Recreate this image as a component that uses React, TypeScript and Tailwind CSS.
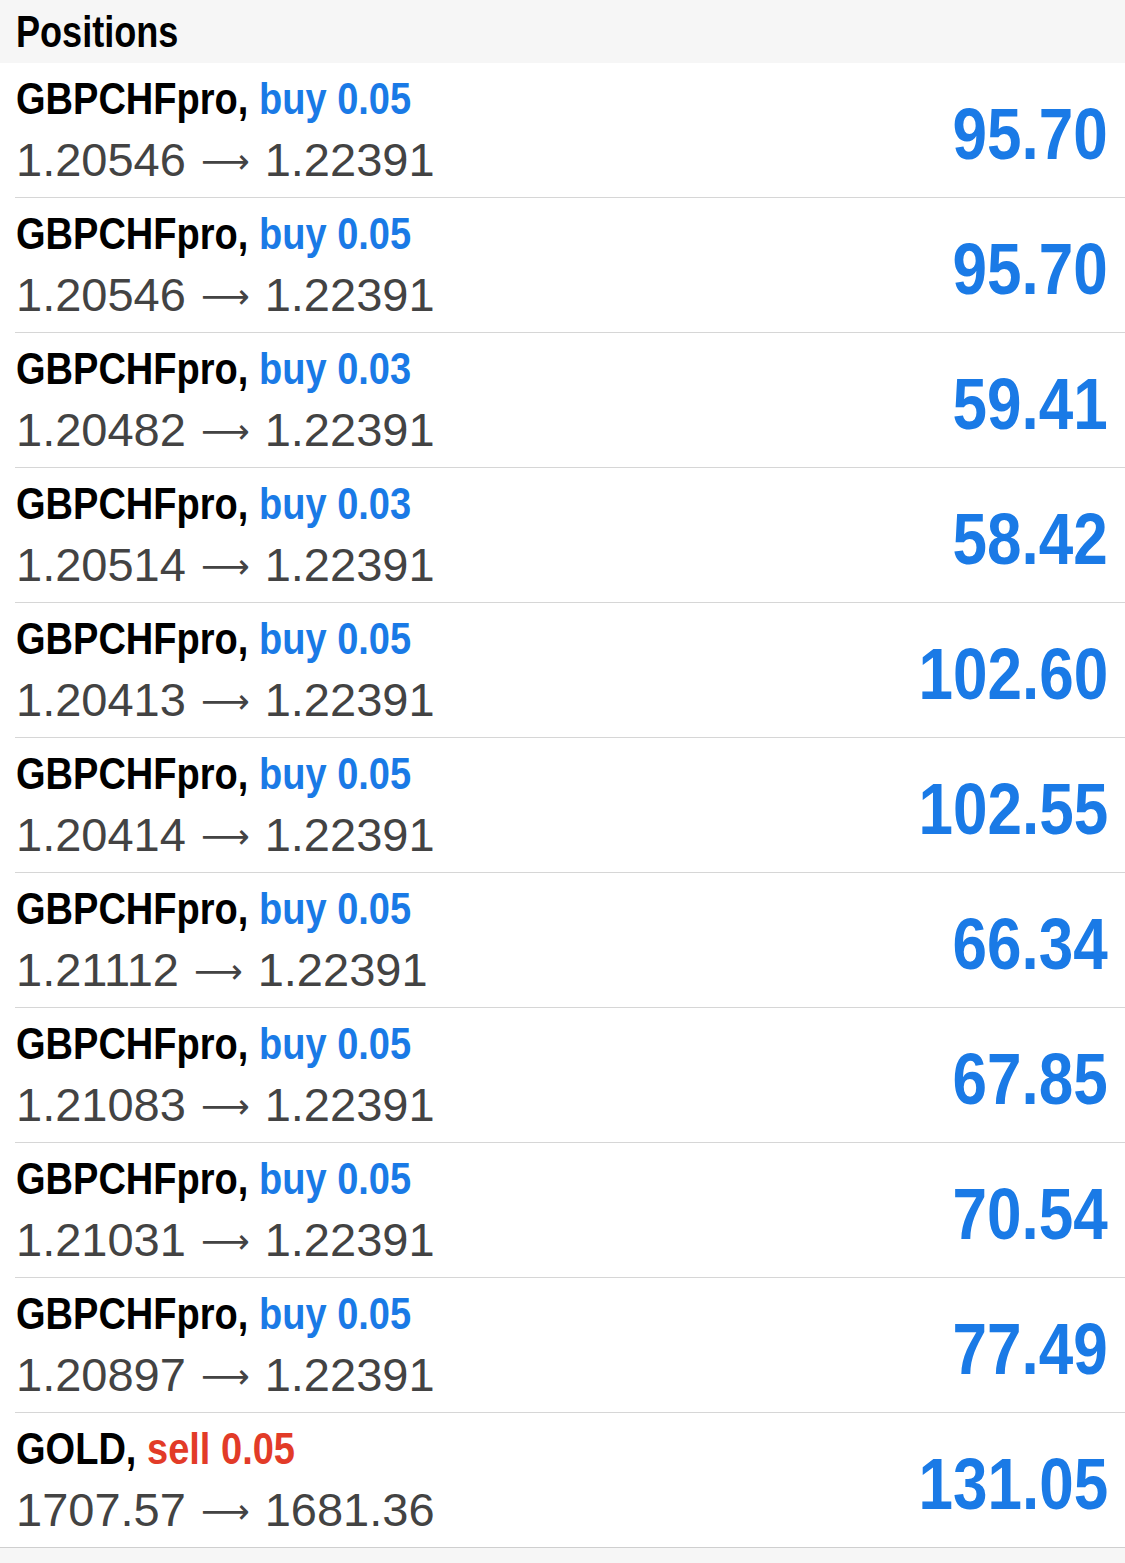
import React from 'react';

interface Position {
  symbol: string;
  side: 'buy' | 'sell';
  volume: string;
  open: string;
  current: string;
  profit: string;
}

const positions: Position[] = [
  { symbol: 'GBPCHFpro', side: 'buy', volume: '0.05', open: '1.20546', current: '1.22391', profit: '95.70' },
  { symbol: 'GBPCHFpro', side: 'buy', volume: '0.05', open: '1.20546', current: '1.22391', profit: '95.70' },
  { symbol: 'GBPCHFpro', side: 'buy', volume: '0.03', open: '1.20482', current: '1.22391', profit: '59.41' },
  { symbol: 'GBPCHFpro', side: 'buy', volume: '0.03', open: '1.20514', current: '1.22391', profit: '58.42' },
  { symbol: 'GBPCHFpro', side: 'buy', volume: '0.05', open: '1.20413', current: '1.22391', profit: '102.60' },
  { symbol: 'GBPCHFpro', side: 'buy', volume: '0.05', open: '1.20414', current: '1.22391', profit: '102.55' },
  { symbol: 'GBPCHFpro', side: 'buy', volume: '0.05', open: '1.21112', current: '1.22391', profit: '66.34' },
  { symbol: 'GBPCHFpro', side: 'buy', volume: '0.05', open: '1.21083', current: '1.22391', profit: '67.85' },
  { symbol: 'GBPCHFpro', side: 'buy', volume: '0.05', open: '1.21031', current: '1.22391', profit: '70.54' },
  { symbol: 'GBPCHFpro', side: 'buy', volume: '0.05', open: '1.20897', current: '1.22391', profit: '77.49' },
  { symbol: 'GOLD', side: 'sell', volume: '0.05', open: '1707.57', current: '1681.36', profit: '131.05' },
];

// no condensed face installed, so squeeze Liberation Sans Bold horizontally
const bold = "font-['Liberation_Sans',Arial,sans-serif] font-bold";

function PositionRow({ p, last }: { p: Position; last: boolean }) {
  return (
    <div className={`h-[135px] pl-[15px] ${last ? 'border-b border-[#cfcfcf]' : ''}`}>
      <div className={`flex h-full items-center pl-[1px] pr-[17px] ${last ? '' : 'border-b border-[#d6d6d6]'}`}>
        <div className="flex flex-1 flex-col pt-[2px]">
          <div className={`${bold} text-[45px] leading-[58px] text-black whitespace-nowrap`}>
            <span className="inline-block origin-left scale-x-[0.845]">
              {p.symbol},{' '}
              <span className={p.side === 'buy' ? 'text-[#1a7ae6]' : 'text-[#e23b28]'}>
                {p.side} {p.volume}
              </span>
            </span>
          </div>
          <div className="font-['Liberation_Sans',Arial,sans-serif] text-[47px] leading-[64px] text-[#434343] whitespace-nowrap">
            {p.open}
            <span className="font-['DejaVu_Sans',sans-serif] text-[34px] align-[3px] mx-[15px]">⟶</span>
            {p.current}
          </div>
        </div>
        <div className={`${bold} text-[73px] leading-none text-[#1a7ae6] pt-[6px] whitespace-nowrap`}>
          <span className="inline-block origin-right scale-x-[0.85]">{p.profit}</span>
        </div>
      </div>
    </div>
  );
}

export default function App() {
  return (
    <div className="w-[1125px] h-[1563px] bg-[#f6f6f6] overflow-hidden">
      <div className={`h-[63px] flex items-center pl-[16px] ${bold} text-[44px] text-black`}>
        <span className="inline-block origin-left scale-x-[0.82]">Positions</span>
      </div>
      <div className="bg-white">
        {positions.map((p, i) => (
          <PositionRow key={i} p={p} last={i === positions.length - 1} />
        ))}
      </div>
    </div>
  );
}
